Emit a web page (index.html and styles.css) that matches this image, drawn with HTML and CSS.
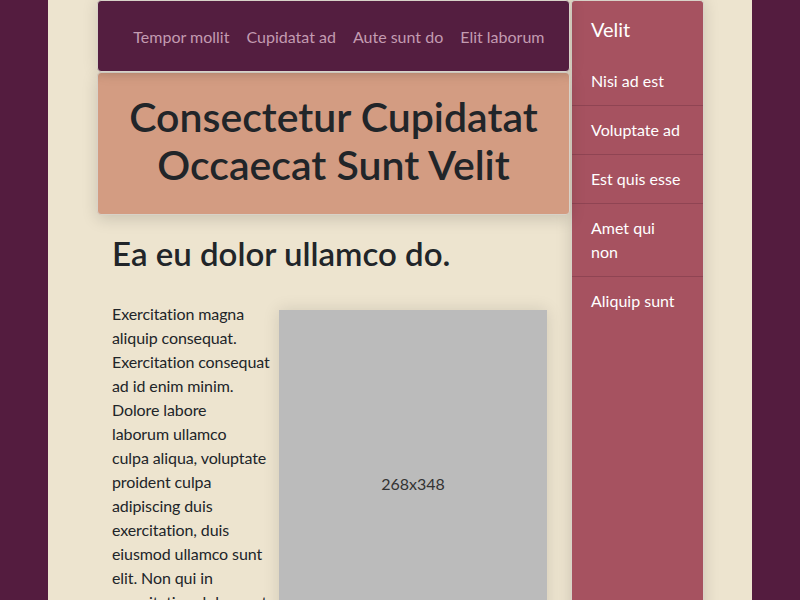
FILE: index.html
```html
<!DOCTYPE html>
<html lang="en">
<head>
<meta charset="utf-8">
<title>Consectetur Cupidatat</title>
<link rel="stylesheet" href="styles.css">
</head>
<body>
<div class="page">
  <main class="main">
    <nav class="navbar">
      <a class="nav-link" href="#">Tempor mollit</a>
      <a class="nav-link" href="#">Cupidatat ad</a>
      <a class="nav-link" href="#">Aute sunt do</a>
      <a class="nav-link" href="#">Elit laborum</a>
    </nav>
    <header class="hero">
      <h1 class="hero-title">Consectetur Cupidatat Occaecat Sunt Velit</h1>
    </header>
    <section class="content">
      <h2 class="content-title">Ea eu dolor ullamco do.</h2>
      <div class="placeholder">268x348</div>
      <p class="content-text">Exercitation magna<br>aliquip consequat.<br>Exercitation consequat<br>ad id enim minim.<br>Dolore labore<br>laborum ullamco<br>culpa aliqua, voluptate<br>proident culpa<br>adipiscing duis<br>exercitation, duis<br>eiusmod ullamco sunt<br>elit. Non qui in<br>exercitation dolor sunt consequat aliqua sunt cillum ad. Lorem ipsum sint exercitation aute velit culpa nisi.</p>
    </section>
  </main>
  <aside class="sidebar">
    <div class="sidebar-title">Velit</div>
    <a class="side-item" href="#">Nisi ad est</a>
    <a class="side-item" href="#">Voluptate ad</a>
    <a class="side-item" href="#">Est quis esse</a>
    <a class="side-item" href="#">Amet qui non</a>
    <a class="side-item" href="#">Aliquip sunt</a>
  </aside>
</div>
</body>
</html>
```
FILE: styles.css
```css
html, body {
  margin: 0;
  padding: 0;
}
body {
  background: #541c3f;
  font-family: "Lato", "Noto Sans", sans-serif;
  color: #212529;
  font-size: 16px;
  line-height: 24px;
  height: 600px;
  overflow: hidden;
}
.page {
  width: 704px;
  margin: 0 auto;
  box-sizing: border-box;
  padding: 0 48px 0 49px;
  min-height: 600px;
  background: #ede4cf;
  display: grid;
  grid-template-columns: 473px 133px;
  column-gap: 1px;
  align-items: start;
}
.main {
  display: flex;
  flex-direction: column;
}
.navbar {
  height: 72px;
  box-sizing: border-box;
  background: #541e40;
  border: 1px solid #d8d2c8;
  border-radius: 4px;
  display: flex;
  justify-content: flex-end;
  align-items: center;
  padding: 2px 16px 0 0;
  box-shadow: 0 0 16px rgba(0, 0, 0, 0.12);
  position: relative;
  z-index: 2;
}
.nav-link {
  color: #c39bb1;
  text-decoration: none;
  padding: 0 8.5px;
}
.hero {
  background: #d39c82;
  border: 1px solid #d8d2c8;
  border-radius: 4px;
  padding: 20px 16px 25px;
  box-shadow: 0 4px 16px rgba(0, 0, 0, 0.15), inset 0 8px 10px -8px rgba(0, 0, 0, 0.12);
  position: relative;
  z-index: 1;
}
.hero-title {
  margin: 0;
  font-size: 41px;
  line-height: 48px;
  font-weight: 600;
  text-align: center;
}
.content {
  padding: 0 15px;
}
.content-title {
  margin: 19px 0 30px;
  font-size: 33px;
  line-height: 38px;
  font-weight: 600;
}
.placeholder {
  float: right;
  width: 268px;
  height: 348px;
  margin: 8px 8px 8px 0;
  background: #bbbbbb;
  color: #333333;
  display: flex;
  align-items: center;
  justify-content: center;
  box-shadow: 0 0 16px rgba(0, 0, 0, 0.12);
}
.content-text {
  margin: 0;
  letter-spacing: -0.1px;
}
.sidebar {
  background: #a65260;
  border: 1px solid #d8d2c8;
  border-bottom: none;
  border-radius: 4px 4px 0 0;
  min-height: 640px;
  display: flex;
  flex-direction: column;
  box-shadow: 0 0 16px rgba(0, 0, 0, 0.15);
}
.sidebar-title {
  color: #ffffff;
  font-size: 20px;
  line-height: 24px;
  padding: 16px 20px 16px 19px;
}
.side-item {
  color: #ffffff;
  text-decoration: none;
  padding: 12px 20px 12px 19px;
  border-bottom: 1px solid #8f4453;
}
.side-item:last-child {
  border-bottom: none;
}
```
